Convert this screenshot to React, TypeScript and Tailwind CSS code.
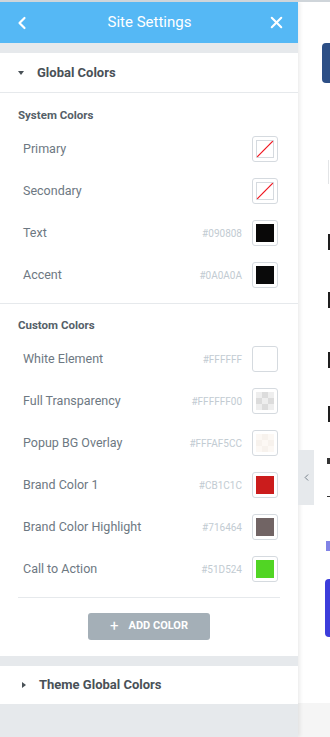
import { ChevronLeft, X } from "lucide-react";

type Swatch = {
  name: string;
  hex?: string;
  kind: "empty" | "solid" | "transparent" | "overlay";
  color?: string;
};

const systemColors: Swatch[] = [
  { name: "Primary", kind: "empty" },
  { name: "Secondary", kind: "empty" },
  { name: "Text", hex: "#090808", kind: "solid", color: "#090808" },
  { name: "Accent", hex: "#0A0A0A", kind: "solid", color: "#0a0a0a" },
];

const customColors: Swatch[] = [
  { name: "White Element", hex: "#FFFFFF", kind: "solid", color: "#ffffff" },
  { name: "Full Transparency", hex: "#FFFFFF00", kind: "transparent" },
  { name: "Popup BG Overlay", hex: "#FFFAF5CC", kind: "overlay" },
  { name: "Brand Color 1", hex: "#CB1C1C", kind: "solid", color: "#cb1c1c" },
  { name: "Brand Color Highlight", hex: "#716464", kind: "solid", color: "#716464" },
  { name: "Call to Action", hex: "#51D524", kind: "solid", color: "#51d524" },
];

// petit damier pour les couleurs transparentes
function Checker({ light }: { light?: boolean }) {
  const a = light ? "bg-[#f7f2ed]" : "bg-[#dcdcdc]";
  const b = light ? "bg-[#fcf8f4]" : "bg-[#eeeeee]";
  return (
    <div className="grid grid-cols-3 grid-rows-3 h-full w-full">
      {[0, 1, 2, 3, 4, 5, 6, 7, 8].map((i) => (
        <div key={i} className={i % 2 === 0 ? b : a} />
      ))}
    </div>
  );
}

function SwatchBox({ s }: { s: Swatch }) {
  return (
    <div className="h-[26px] w-[26px] shrink-0 rounded-[3px] border border-[#d5dadf] bg-white p-[3px]">
      {s.kind === "empty" && (
        <svg viewBox="0 0 18 18" className="h-full w-full">
          <rect x="0.5" y="0.5" width="17" height="17" fill="none" stroke="#d5dadf" />
          <line x1="1.2" y1="16.8" x2="16.8" y2="1.2" stroke="#f0131e" strokeWidth="1.2" />
        </svg>
      )}
      {s.kind === "solid" && (
        <div className="h-full w-full" style={{ backgroundColor: s.color }} />
      )}
      {s.kind === "transparent" && <Checker />}
      {s.kind === "overlay" && <Checker light />}
    </div>
  );
}

function ColorRow({ s }: { s: Swatch }) {
  return (
    <div className="flex h-[42px] items-center pl-[23px] pr-[20px]">
      <span className="flex-1 text-[12.5px] text-[#6d7882]">{s.name}</span>
      {s.hex && (
        <span className="mr-[10px] text-[10px] text-[#c2cbd2]">{s.hex}</span>
      )}
      <SwatchBox s={s} />
    </div>
  );
}

export default function App() {
  return (
    <div
      className="relative flex h-[737px] w-[330px] overflow-hidden border-t-2 border-[#cfd5da] bg-white"
      style={{ fontFamily: "Roboto, 'Liberation Sans', sans-serif" }}
    >
      {/* Panneau des réglages */}
      <div className="z-10 flex w-[298px] shrink-0 flex-col bg-[#e6e9ec] shadow-[2px_0_4px_rgba(0,0,0,0.08)]">
        {/* En-tête */}
        <div className="flex h-[41px] items-center justify-between bg-[#55b8f5] px-[12px] text-white">
          <ChevronLeft size={20} strokeWidth={2.6} />
          <span className="text-[15px]">Site Settings</span>
          <X size={19} strokeWidth={2.6} />
        </div>

        <div className="mt-[10px] bg-white">
          {/* Global Colors */}
          <div className="flex h-[40px] items-center border-b border-[#e6e9ec] pl-[18px]">
            <span className="mr-[13px] h-0 w-0 border-x-[3.5px] border-t-[4px] border-x-transparent border-t-[#495157]" />
            <span className="text-[13px] font-bold text-[#495157]">Global Colors</span>
          </div>

          {/* System Colors */}
          <div className="border-b border-[#e6e9ec] pt-[14px] pb-[7px]">
            <div className="pl-[18px] text-[11.5px] font-bold leading-[16px] text-[#556068]">
              System Colors
            </div>
            <div className="mt-[5px]">
              {systemColors.map((s) => (
                <ColorRow key={s.name} s={s} />
              ))}
            </div>
          </div>

          {/* Custom Colors */}
          <div className="pt-[13px] pb-[16px]">
            <div className="pl-[18px] text-[11.5px] font-bold leading-[16px] text-[#556068]">
              Custom Colors
            </div>
            <div className="mt-[5px]">
              {customColors.map((s) => (
                <ColorRow key={s.name} s={s} />
              ))}
            </div>
            <div className="mx-[18px] mt-[7px] border-t border-[#e6e9ec]" />
            <div className="mt-[15px] flex justify-center">
              <button className="flex h-[27px] w-[122px] items-center justify-center gap-[10px] rounded-[3px] bg-[#a4afb7] text-[11px] font-bold text-white">
                <span className="text-[15px] font-normal leading-none">+</span>
                <span>ADD COLOR</span>
              </button>
            </div>
          </div>
        </div>

        {/* Theme Global Colors */}
        <div className="mt-[10px] flex h-[38px] items-center bg-white pl-[22px]">
          <span className="mr-[13px] h-0 w-0 border-y-[3.5px] border-l-[4px] border-y-transparent border-l-[#495157]" />
          <span className="text-[13px] font-bold text-[#495157]">Theme Global Colors</span>
        </div>
      </div>

      {/* Aperçu de la page (coupé à droite) */}
      <div className="flex flex-1 flex-col bg-white">
        <div className="ml-[24px] mt-[41px] h-[40px] rounded-l-[4px] bg-[#2d4f86]" />
        <div className="ml-[30px] mt-[77px] h-[24px] border-l border-[#e2e4e6]" />
        <div className="ml-[30px] mt-[50px] h-[16px] bg-[#1e1e1e]" />
        <div className="ml-[30px] mt-[42px] h-[16px] bg-[#1e1e1e]" />
        <div className="ml-[30px] mt-[44px] h-[16px] bg-[#1e1e1e]" />
        <div className="ml-[30px] mt-[38px] h-[16px] bg-[#1e1e1e]" />
        <div className="ml-[29px] mt-[36px] h-[6px] bg-[#333]" />
        <div className="ml-[29px] mt-[32px] h-[1px] bg-[#333]" />
        <div className="ml-[28px] mt-[44px] h-[10px] bg-[#8183e6]" />
        <div className="ml-[27px] mt-[28px] h-[58px] rounded-l-[4px] bg-[#3c3ddb]" />
        <div className="flex-1" />
        <div className="h-[34px] bg-[#f5f5f5]" />
      </div>

      {/* Onglet pour replier le panneau */}
      <div className="absolute left-[298px] top-[448px] z-20 flex h-[55px] w-[16px] items-center justify-center bg-[#e6e9ec] text-[#6d7882]">
        <ChevronLeft size={11} strokeWidth={2} />
      </div>
    </div>
  );
}
